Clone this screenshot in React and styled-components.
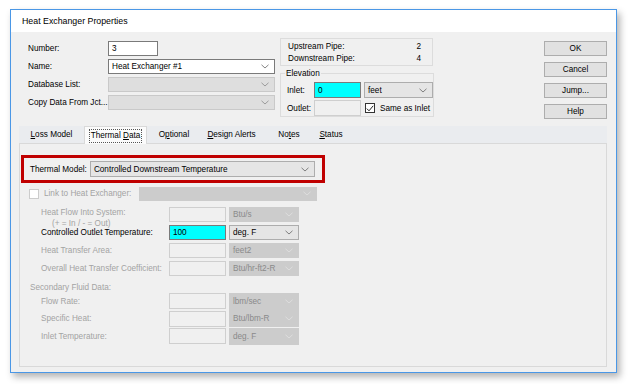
import React from "react";
import styled, { createGlobalStyle } from "styled-components";

const GlobalStyle = createGlobalStyle`
  html, body {
    margin: 0;
    padding: 0;
    background: #ffffff;
  }
  body {
    font-family: "Liberation Sans", Arial, sans-serif;
    font-size: 8.2px;
    color: #000;
  }
`;

const Page = styled.div`
  width: 630px;
  height: 384px;
  padding: 9px 0 0 10px;
  box-sizing: border-box;
  background: #fff;
`;

const Window = styled.div`
  width: 607px;
  height: 364px;
  box-sizing: border-box;
  border: 1px solid #4a97e6;
  background: #f0f0f0;
  display: flex;
  flex-direction: column;
  box-shadow: 3px 4px 7px rgba(0, 0, 0, 0.3);
`;

const TitleBar = styled.div`
  height: 22px;
  background: #fff;
  display: flex;
  align-items: center;
  padding-left: 11px;
  font-size: 8.8px;
  color: #000;
`;

const Body = styled.div`
  flex: 1;
  display: flex;
  flex-direction: column;
  padding: 0 9px 4px 8px;
`;

const TopSection = styled.div`
  height: 94px;
  display: flex;
  align-items: flex-start;
  padding-left: 9px;
`;

const LeftForm = styled.div`
  margin-top: 9px;
  display: grid;
  grid-template-columns: 80px 167px;
  grid-auto-rows: 15px;
  row-gap: 3px;
  align-items: center;
`;

const Label = styled.span`
  color: ${(p) => (p.$disabled ? "#a3a3a3" : "#000")};
  white-space: nowrap;
  line-height: 11px;
`;

const Input = styled.div`
  box-sizing: border-box;
  height: ${(p) => p.$h || 15}px;
  width: ${(p) => (p.$w ? `${p.$w}px` : "auto")};
  border: 1px solid
    ${(p) => (p.$variant === "disabled" ? "#cfcfcf" : "#7a7a7a")};
  background: ${(p) =>
    p.$variant === "cyan"
      ? "#00ffff"
      : p.$variant === "disabled"
      ? "#f0f0f0"
      : "#fff"};
  padding: 0 3px;
  display: flex;
  align-items: center;
  color: #000;
`;

const selectColors = {
  white: { bg: "#fff", border: "#7a7a7a", text: "#000", chevron: "#666" },
  enabled: { bg: "#e5e5e5", border: "#adadad", text: "#000", chevron: "#666" },
  faded: { bg: "#dedede", border: "#c9c9c9", text: "#8d8d8d", chevron: "#8a8a8a" },
  disabled: { bg: "#cccccc", border: "#cccccc", text: "#8a8a8a", chevron: "#e2e2e2" },
};

const SelectBox = styled.div`
  box-sizing: border-box;
  height: ${(p) => p.$h || 15}px;
  width: ${(p) => (p.$w ? `${p.$w}px` : "auto")};
  border: 1px solid ${(p) => selectColors[p.$variant].border};
  background: ${(p) => selectColors[p.$variant].bg};
  color: ${(p) => selectColors[p.$variant].text};
  display: flex;
  align-items: center;
  justify-content: space-between;
  padding: 0 5px 0 3px;
  white-space: nowrap;
`;

function Select({ value, variant = "enabled", w, h }) {
  return (
    <SelectBox $variant={variant} $w={w} $h={h}>
      <span>{value}</span>
      <svg width="8" height="5" viewBox="0 0 8 5">
        <polyline
          points="0.5,0.8 4,4 7.5,0.8"
          fill="none"
          stroke={selectColors[variant].chevron}
          strokeWidth="0.8"
        />
      </svg>
    </SelectBox>
  );
}

const MiddleColumn = styled.div`
  margin-left: 5px;
  margin-top: 6px;
  width: 153px;
  display: flex;
  flex-direction: column;
  gap: 3px;
`;

const PipeBox = styled.div`
  box-sizing: border-box;
  height: 28px;
  border: 1px solid #dcdcdc;
  padding: 2px 11px 0 7px;
  display: flex;
  flex-direction: column;
`;

const PipeRow = styled.div`
  display: flex;
  justify-content: space-between;
  line-height: 12px;
  height: 12px;
`;

const GroupBox = styled.fieldset`
  margin: 0;
  box-sizing: border-box;
  height: 48px;
  border: 1px solid #dcdcdc;
  padding: 4px 0 0 6px;
  display: grid;
  grid-template-columns: 24px 47px 69px;
  grid-auto-rows: 16px;
  column-gap: 3px;
  row-gap: 2px;
  align-items: center;

  legend {
    padding: 0 1px;
    margin-left: -2px;
    font-size: 8.2px;
    line-height: 9px;
  }
`;

const CheckRow = styled.label`
  display: flex;
  align-items: center;
  gap: 5px;
  padding-left: 1px;
  color: ${(p) => (p.$disabled ? "#a3a3a3" : "#000")};
  white-space: nowrap;
`;

const CheckBox = styled.span`
  box-sizing: border-box;
  width: 10px;
  height: 10px;
  border: 1px solid ${(p) => (p.$disabled ? "#cccccc" : "#333")};
  background: #fff;
  display: flex;
  align-items: center;
  justify-content: center;
`;

const ButtonColumn = styled.div`
  margin-left: 111px;
  margin-top: 9px;
  display: flex;
  flex-direction: column;
  gap: 6px;
`;

const Button = styled.div`
  box-sizing: border-box;
  width: 63px;
  height: 15px;
  border: 1px solid #adadad;
  background: #e1e1e1;
  display: flex;
  align-items: center;
  justify-content: center;
`;

const TabStrip = styled.div`
  height: 17px;
  display: flex;
  align-items: flex-end;
  background: #eaecef;
  position: relative;
  z-index: 1;
`;

const Tab = styled.div`
  box-sizing: border-box;
  width: ${(p) => p.$w}px;
  height: ${(p) => (p.$active ? 18 : 17)}px;
  margin-bottom: ${(p) => (p.$active ? -1 : 0)}px;
  display: flex;
  align-items: center;
  justify-content: center;
  background: ${(p) => (p.$active ? "#fbfbfb" : "transparent")};
  border: ${(p) => (p.$active ? "1px solid #d9d9d9" : "none")};
  border-bottom: none;
  white-space: nowrap;
`;

const FocusText = styled.span`
  outline: ${(p) => (p.$focus ? "1px dotted #555" : "none")};
  outline-offset: 1px;
  line-height: 10px;

  u {
    text-decoration: underline;
    text-underline-offset: 1px;
  }
`;

const Panel = styled.div`
  box-sizing: border-box;
  height: 224px;
  border: 1px solid #d9d9d9;
  background: #f0f0f0;
  padding: 11px 0 0 1px;
  display: flex;
  flex-direction: column;
`;

const Highlight = styled.div`
  box-sizing: border-box;
  width: 304px;
  height: 28px;
  border: 3px solid #c00000;
  display: flex;
  align-items: center;
  padding: 0 7px 0 6px;
  gap: 3px;
`;

const LinkRow = styled.div`
  margin-top: 4px;
  display: flex;
  align-items: center;
  padding-left: 7px;
  height: 13px;
`;

const LinkSelect = styled.div`
  margin-left: 8px;
`;

const DataGrid = styled.div`
  margin-top: ${(p) => p.$top}px;
  padding-left: ${(p) => p.$indent}px;
  display: grid;
  grid-template-columns: 128px 57px 73px;
  grid-auto-rows: ${(p) => p.$row}px;
  row-gap: ${(p) => p.$gap}px;
  column-gap: 0;
  align-items: center;

  & > :nth-child(3n) {
    margin-left: 3px;
  }
`;

const TwoLineLabel = styled.div`
  height: 15px;
  display: flex;
  flex-direction: column;
  justify-content: flex-start;
  color: #a3a3a3;
  line-height: 11px;
  white-space: nowrap;

  span + span {
    padding-left: 11px;
  }
`;

const SectionLabel = styled.div`
  margin-top: 6px;
  padding-left: 9px;
  color: #a3a3a3;
  line-height: 11px;
`;

const tabs = [
  { pre: "", u: "L", post: "oss Model", w: 65 },
  { pre: "Thermal ", u: "D", post: "ata", w: 63, active: true },
  { pre: "O", u: "p", post: "tional", w: 54 },
  { pre: "", u: "D", post: "esign Alerts", w: 61 },
  { pre: "No", u: "t", post: "es", w: 54 },
  { pre: "", u: "S", post: "tatus", w: 30 },
];

const upperRows = [
  { label: "Controlled Outlet Temperature:", unit: "deg. F", value: "100", enabled: true },
  { label: "Heat Transfer Area:", unit: "feet2" },
  { label: "Overall Heat Transfer Coefficient:", unit: "Btu/hr-ft2-R" },
];

const fluidRows = [
  { label: "Flow Rate:", unit: "lbm/sec" },
  { label: "Specific Heat:", unit: "Btu/lbm-R" },
  { label: "Inlet Temperature:", unit: "deg. F" },
];

function Check({ checked, disabled }) {
  return (
    <CheckBox $disabled={disabled}>
      {checked && (
        <svg width="8" height="7" viewBox="0 0 8 7">
          <polyline points="0.8,3.6 3,5.8 7.2,0.8" fill="none" stroke="#222" strokeWidth="1" />
        </svg>
      )}
    </CheckBox>
  );
}

export default function App() {
  return (
    <Page>
      <GlobalStyle />
      <Window>
        <TitleBar>Heat Exchanger Properties</TitleBar>
        <Body>
          <TopSection>
            <LeftForm>
              <Label>Number:</Label>
              <Input $w={50}>3</Input>
              <Label>Name:</Label>
              <Select value="Heat Exchanger #1" variant="white" />
              <Label>Database List:</Label>
              <Select value="" variant="faded" />
              <Label>Copy Data From Jct...</Label>
              <Select value="" variant="faded" />
            </LeftForm>

            <MiddleColumn>
              <PipeBox>
                <PipeRow>
                  <span>Upstream Pipe:</span>
                  <span>2</span>
                </PipeRow>
                <PipeRow>
                  <span>Downstream Pipe:</span>
                  <span>4</span>
                </PipeRow>
              </PipeBox>
              <GroupBox>
                <legend>Elevation</legend>
                <Label>Inlet:</Label>
                <Input $variant="cyan" $h={16}>0</Input>
                <Select value="feet" h={16} />
                <Label>Outlet:</Label>
                <Input $variant="disabled" $h={16} />
                <CheckRow>
                  <Check checked />
                  Same as Inlet
                </CheckRow>
              </GroupBox>
            </MiddleColumn>

            <ButtonColumn>
              <Button>OK</Button>
              <Button>Cancel</Button>
              <Button>Jump...</Button>
              <Button>Help</Button>
            </ButtonColumn>
          </TopSection>

          <TabStrip>
            {tabs.map((t) => (
              <Tab key={t.post} $w={t.w} $active={t.active}>
                <FocusText $focus={t.active}>
                  {t.pre}
                  <u>{t.u}</u>
                  {t.post}
                </FocusText>
              </Tab>
            ))}
          </TabStrip>

          <Panel>
            <Highlight>
              <Label>Thermal Model:</Label>
              <Select value="Controlled Downstream Temperature" w={227} h={16} />
            </Highlight>

            <LinkRow>
              <CheckRow $disabled>
                <Check disabled />
                Link to Heat Exchanger:
              </CheckRow>
              <LinkSelect>
                <Select value="" variant="disabled" w={178} h={14} />
              </LinkSelect>
            </LinkRow>

            <DataGrid $top={7} $indent={20} $row={15} $gap={3}>
              <TwoLineLabel>
                <span>Heat Flow Into System:</span>
                <span>(+ = In / - = Out)</span>
              </TwoLineLabel>
              <Input $variant="disabled" />
              <Select value="Btu/s" variant="disabled" />
              {upperRows.map((r) => (
                <React.Fragment key={r.label}>
                  <Label $disabled={!r.enabled}>{r.label}</Label>
                  <Input $variant={r.enabled ? "cyan" : "disabled"}>{r.value}</Input>
                  <Select value={r.unit} variant={r.enabled ? "enabled" : "disabled"} />
                </React.Fragment>
              ))}
            </DataGrid>

            <SectionLabel>Secondary Fluid Data:</SectionLabel>

            <DataGrid $top={0} $indent={20} $row={16} $gap={1.5}>
              {fluidRows.map((r) => (
                <React.Fragment key={r.label}>
                  <Label $disabled>{r.label}</Label>
                  <Input $variant="disabled" $h={16} />
                  <Select value={r.unit} variant="disabled" h={17} />
                </React.Fragment>
              ))}
            </DataGrid>
          </Panel>
        </Body>
      </Window>
    </Page>
  );
}
